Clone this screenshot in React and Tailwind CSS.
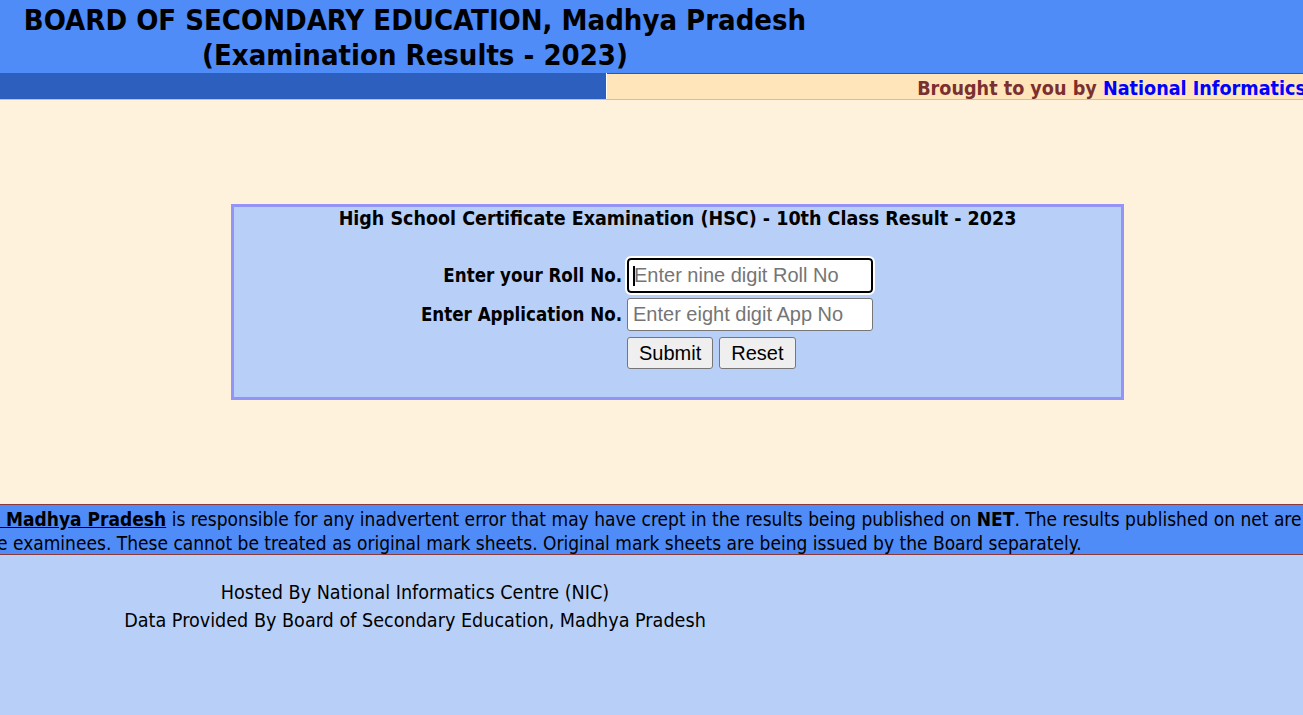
import React from "react";

const tahoma = "font-['DejaVu_Sans_Condensed','DejaVu_Sans',sans-serif]";
const arial = "font-['Liberation_Sans',Arial,sans-serif]";

const App = () => {
  return (
    <div className={`min-h-screen flex flex-col bg-[#b8d0f8] ${tahoma}`}>
      {/* header */}
      <div className="h-[73px] bg-[#4f8cf8]">
        <div className="w-[830px] text-center font-bold text-[29px] leading-[35px] text-black pt-[3px]">
          <div>BOARD OF SECONDARY EDUCATION, Madhya Pradesh</div>
          <div>(Examination Results - 2023)</div>
        </div>
      </div>

      {/* strip */}
      <div className="flex h-[27px] border-b border-[#a8c4f0]">
        <div className="w-[607px] bg-[#2c5fbe] border-r border-white"></div>
        <div className="flex-1 bg-[#ffe5b9] border-t border-[#8b3a3a] overflow-hidden flex justify-end items-center">
          <div className="whitespace-nowrap font-bold text-[19.6px] leading-[24px] text-[#7a3030] -mr-[3px] pt-[4px]">
            Brought to you by <span className="text-[#0000ff]">National Informatics</span>
          </div>
        </div>
      </div>

      {/* main */}
      <div className="h-[404px] bg-[#fff2dc] pt-[104px]">
        <div className="ml-[231px] w-[893px] h-[196px] bg-[#b8d0f8] border-[3px] border-[#9494f8]">
          <div className="text-center font-bold text-[19.5px] leading-[24px]">
            High School Certificate Examination (HSC) - 10th Class Result - 2023
          </div>
          <div className="mt-[27px] flex flex-col gap-[5px]">
            <div className="flex items-center">
              <label className="w-[393px] text-right pr-[5px] font-bold text-[18.6px]">
                Enter your Roll No.
              </label>
              <div className="relative">
                <input
                  type="text"
                  placeholder="Enter nine digit Roll No"
                  className={`w-[246px] h-[35px] px-[5px] bg-white border-2 border-black rounded-[4px] outline outline-2 outline-white text-[20px] placeholder:text-[#757575] ${arial}`}
                />
                <span className="absolute left-[6px] top-[8px] w-[1.5px] h-[20px] bg-black"></span>
              </div>
            </div>
            <div className="flex items-center">
              <label className="w-[393px] text-right pr-[5px] font-bold text-[18.6px]">
                Enter Application No.
              </label>
              <input
                type="text"
                placeholder="Enter eight digit App No"
                className={`w-[246px] h-[33px] px-[5px] bg-white border border-[#767676] rounded-[3px] text-[20px] placeholder:text-[#757575] ${arial}`}
              />
            </div>
            <div className="flex gap-[6px] pl-[393px] mt-[1px]">
              <button className={`h-[32px] px-[11px] bg-[#efefef] border border-[#767676] rounded-[3px] text-[20px] ${arial}`}>
                Submit
              </button>
              <button className={`h-[32px] px-[11px] bg-[#efefef] border border-[#767676] rounded-[3px] text-[20px] ${arial}`}>
                Reset
              </button>
            </div>
          </div>
        </div>
      </div>

      {/* disclaimer */}
      <div className="h-[51px] bg-[#4f8cf8] border-t border-b border-[#8b3a3a] overflow-hidden text-[19px] leading-[24px] text-black whitespace-nowrap pt-[2px]">
        <div>
          <u className="font-bold">&nbsp;Madhya Pradesh</u> is responsible for any inadvertent error that may have crept in the results being published on <b>NET</b>. The results published on net are only for immediate information to th
        </div>
        <div className="-ml-[3px]">
          e examinees. These cannot be treated as original mark sheets. Original mark sheets are being issued by the Board separately.
        </div>
      </div>

      {/* footer */}
      <div className="flex-1 bg-[#b8d0f8] pt-[24px]">
        <div className="w-[830px] text-center text-[19.6px] leading-[28px] text-black">
          <div>Hosted By National Informatics Centre (NIC)</div>
          <div>Data Provided By Board of Secondary Education, Madhya Pradesh</div>
        </div>
      </div>
    </div>
  );
};

export default App;
